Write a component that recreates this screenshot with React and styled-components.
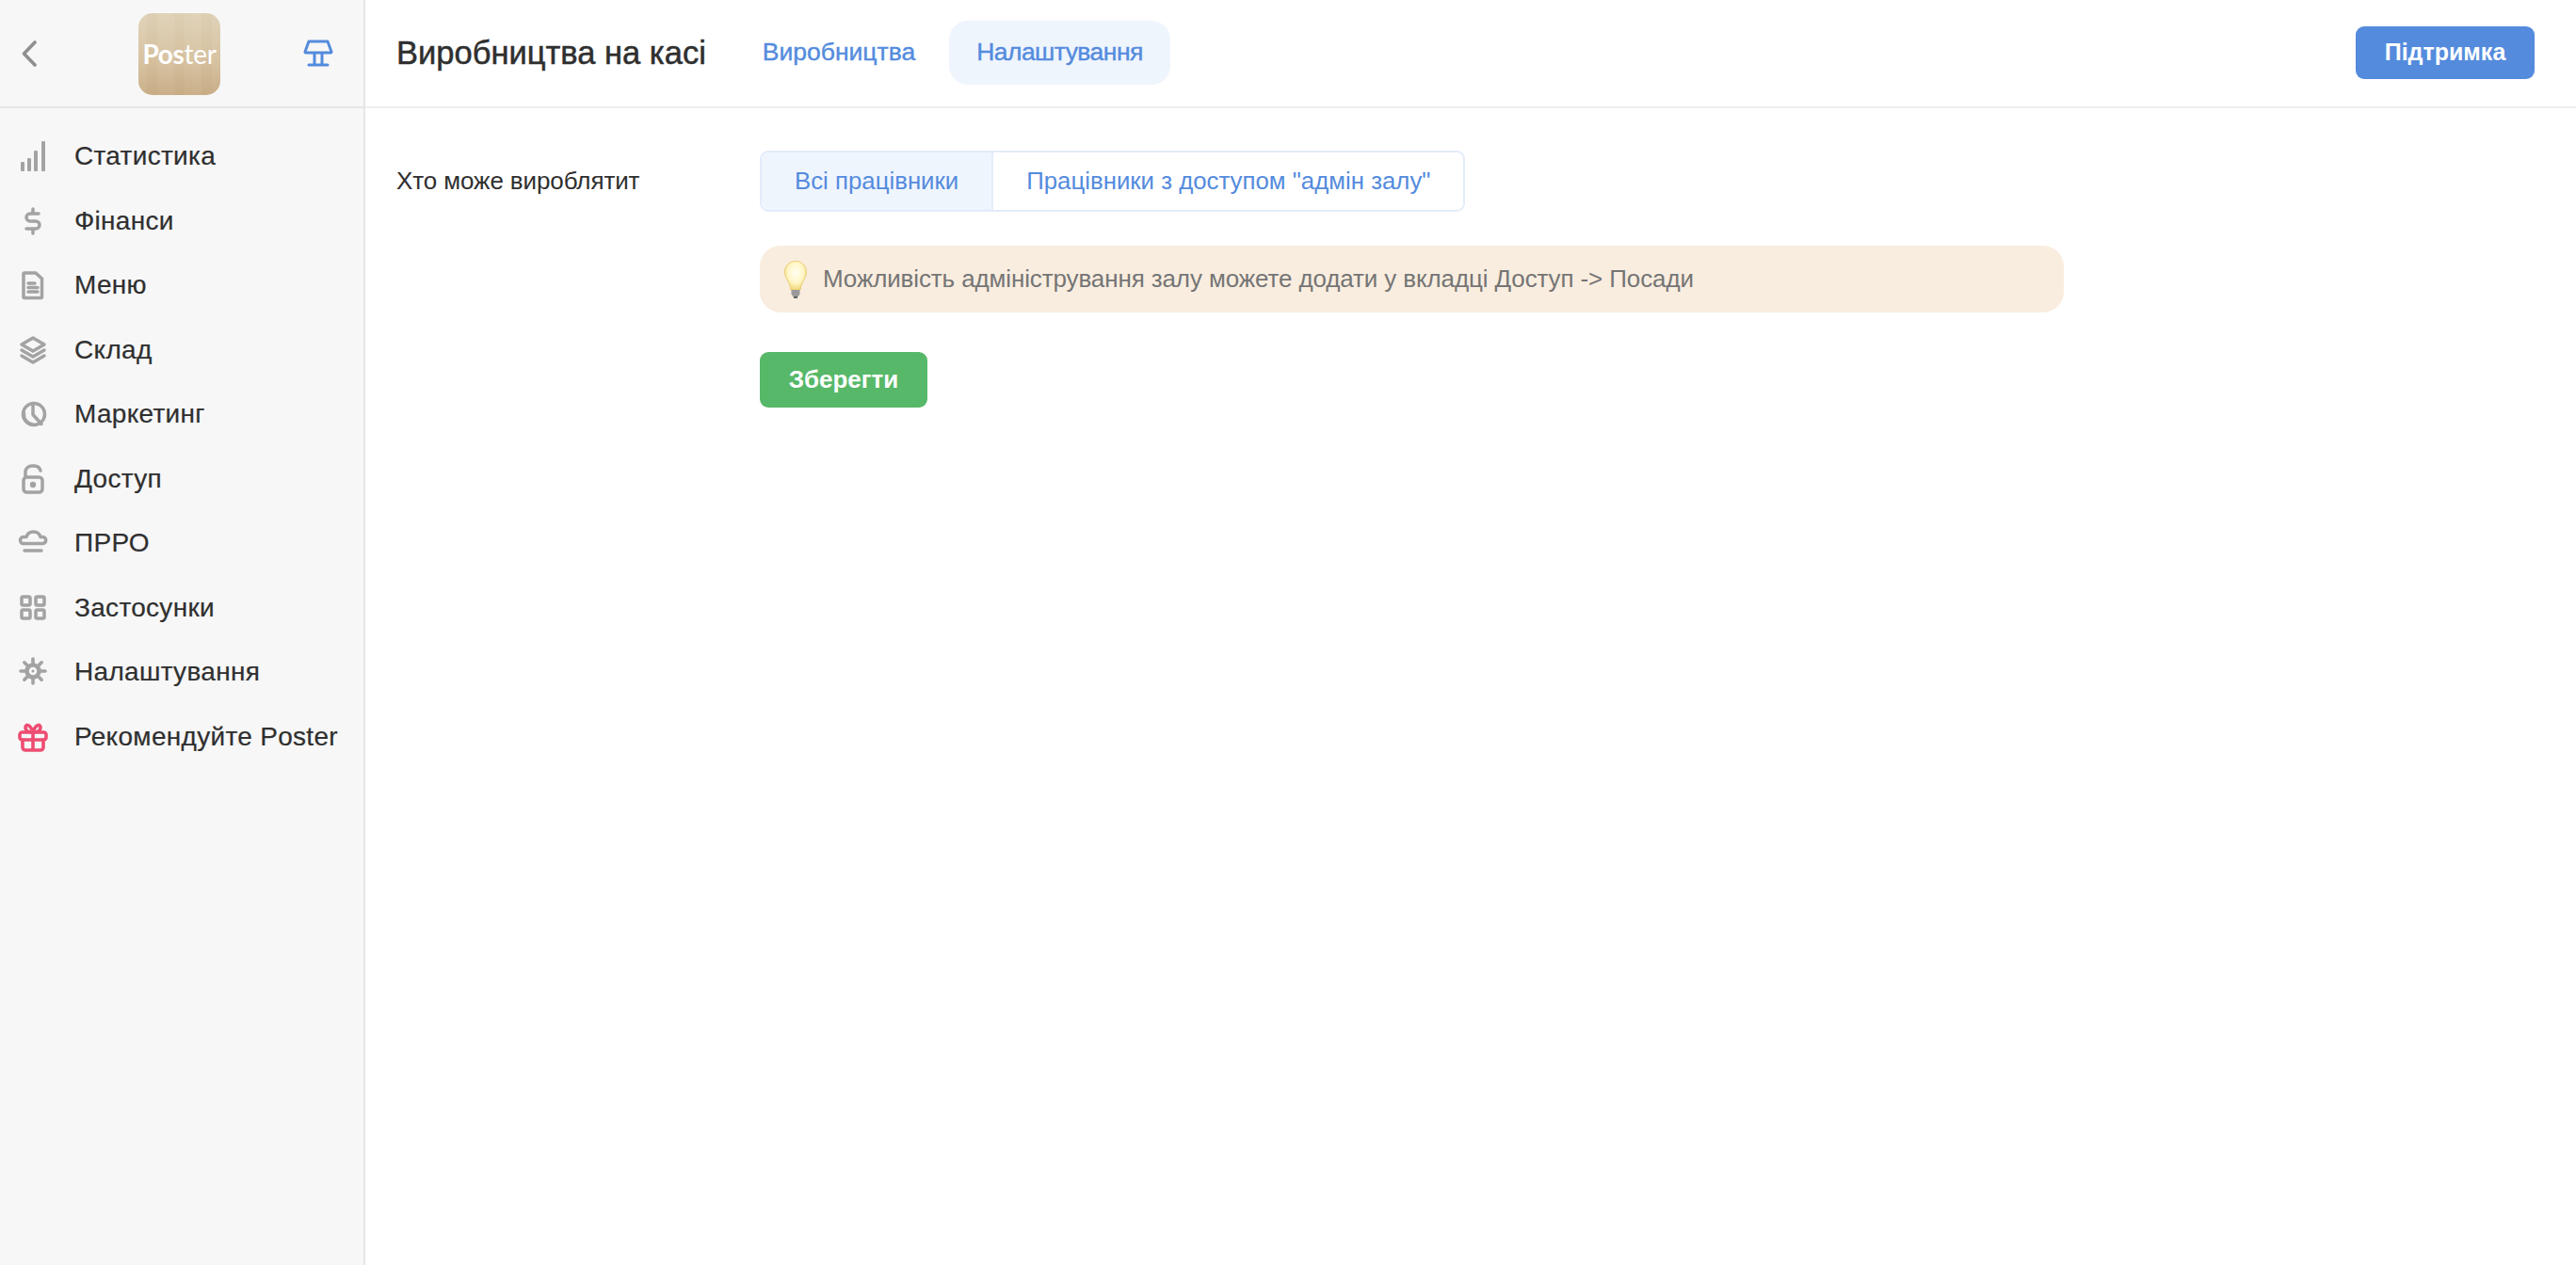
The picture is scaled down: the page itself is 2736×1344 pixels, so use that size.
import React from 'react';
import styled, { createGlobalStyle } from 'styled-components';

const GlobalStyle = createGlobalStyle`
  html, body { margin: 0; padding: 0; height: 100%; background: #fff; }
  body { font-family: "Liberation Sans", Arial, sans-serif; color: #2f2f2f; }
  #root { height: 100%; }
`;

const Page = styled.div`
  display: flex;
  height: 1344px;
  overflow: hidden;
`;

const Sidebar = styled.aside`
  width: 388px;
  flex: none;
  box-sizing: border-box;
  background: #f7f7f7;
  border-right: 2px solid #e6e6e6;
`;

const SideTop = styled.div`
  height: 115px;
  box-sizing: border-box;
  border-bottom: 2px solid #e6e6e6;
  display: grid;
  grid-template-columns: 125px 87px 1fr;
  align-items: center;
  padding: 0 32px 0 22px;
`;

const Logo = styled.div`
  width: 87px;
  height: 87px;
  margin-top: 1px;
  border-radius: 15px;
  display: flex;
  align-items: center;
  justify-content: center;
  font-family: Lato, "Liberation Sans", sans-serif;
  font-size: 28px;
  letter-spacing: -0.3px;
  color: #fff;
  background:
    repeating-linear-gradient(90deg, rgba(255,255,255,.025) 0 9px, rgba(120,80,30,.025) 9px 20px, rgba(255,255,255,.012) 20px 29px),
    linear-gradient(180deg, #e0d2b8 0%, #d7c3a2 55%, #c9ae87 100%);
  b { font-weight: 700; }
  span { font-weight: 400; }
`;

const StandIcon = styled.svg`
  justify-self: end;
  width: 32px;
  height: 32px;
`;

const Nav = styled.nav`
  padding-top: 17px;
`;

const NavRow = styled.a`
  display: flex;
  align-items: center;
  height: 68.5px;
  padding-left: 19px;
  gap: 28px;
  font-size: 28px;
  letter-spacing: 0.3px;
  color: #2f2f2f;
  -webkit-text-stroke: 0.2px #2f2f2f;
  white-space: nowrap;
`;

const NavIcon = styled.svg`
  width: 32px;
  height: 32px;
  flex: none;
  fill: none;
  stroke: ${p => p.$color || '#a3a3a3'};
  stroke-width: 3.5;
  stroke-linecap: round;
  stroke-linejoin: round;
`;

const Main = styled.main`
  flex: 1;
  min-width: 0;
`;

const Header = styled.header`
  height: 115px;
  box-sizing: border-box;
  border-bottom: 2px solid #f0f0f0;
  display: flex;
  align-items: center;
  gap: 7px;
  padding: 0 44px 0 33px;
`;

const Title = styled.h1`
  margin: 0 24px 0 0;
  font-size: 34.5px;
  font-weight: 400;
  -webkit-text-stroke: 0.5px #2f2f2f;
  color: #2f2f2f;
  white-space: nowrap;
`;

const Tab = styled.a`
  display: flex;
  align-items: center;
  height: 68px;
  margin-top: -2px;
  padding: 0 29px;
  border-radius: 20px;
  font-size: 26.5px;
  letter-spacing: ${p => (p.$active ? '-0.55px' : '0')};
  color: #548bdd;
  -webkit-text-stroke: 0.4px #548bdd;
  background: ${p => (p.$active ? '#eff5fd' : 'transparent')};
`;

const Support = styled.button`
  margin-left: auto;
  width: 190px;
  height: 56px;
  margin-top: -2px;
  border: none;
  border-radius: 9px;
  background: #548bdd;
  color: #fff;
  font: 700 25px "Liberation Sans", Arial, sans-serif;
`;

const Content = styled.div`
  padding: 45px 0 0 33px;
  display: grid;
  grid-template-columns: 386px 1385px;
  align-items: start;
`;

const FieldLabel = styled.div`
  font-size: 26px;
  letter-spacing: -0.1px;
  line-height: 64px;
  color: #2f2f2f;
`;

const Field = styled.div`
  display: flex;
  flex-direction: column;
  align-items: flex-start;
`;

const Segment = styled.div`
  display: flex;
  height: 65px;
  box-sizing: border-box;
  border: 2px solid #e3ecfa;
  border-radius: 9px;
  overflow: hidden;
`;

const SegmentItem = styled.div`
  display: flex;
  align-items: center;
  padding: 0 35px;
  font-size: 25.8px;
  color: #548bdd;
  background: ${p => (p.$active ? '#eff5fd' : '#fff')};
  & + & { border-left: 2px solid #e3ecfa; }
`;

const Notice = styled.div`
  align-self: stretch;
  margin-top: 36px;
  height: 71px;
  border-radius: 22px;
  background: #f9eddf;
  display: flex;
  align-items: center;
  gap: 17px;
  padding-left: 26px;
  font-size: 26px;
  letter-spacing: -0.12px;
  color: #757575;
`;

const SaveButton = styled.button`
  margin-top: 42px;
  width: 178px;
  height: 59px;
  border: none;
  border-radius: 9px;
  background: #56b868;
  color: #fff;
  font: 700 26px "Liberation Sans", Arial, sans-serif;
`;

const gearTeeth = [0, 45, 90, 135, 180, 225, 270, 315];

const icons = {
  stats: (
    <g fill="#a3a3a3" stroke="none">
      <rect x="3" y="22" width="4" height="10" rx="1" />
      <rect x="10" y="18" width="4" height="14" rx="1" />
      <rect x="17" y="10" width="4" height="22" rx="1" />
      <rect x="25" y="0" width="4" height="32" rx="1" />
    </g>
  ),
  money: <path d="M22 8H13a4 4 0 0 0-4 4v0a4 4 0 0 0 4 4h6a4 4 0 0 1 4 4v0a4 4 0 0 1-4 4H9M16 3v5M16 24v5" />,
  doc: <path d="M7 3h12l6.500 6v19.500a1 1 0 0 1-1 1H7a1 1 0 0 1-1-1V4a1 1 0 0 1 1-1zM11 14h7M11 18.500h10M11 23h10" />,
  layers: <path d="M16 3l12 7-12 7-12-7zM4 16l12 7 12-7M4 22l12 7 12-7" />,
  pie: (
    <>
      <circle cx="17" cy="16" r="11.500" />
      <path d="M16 4.500v12l9 10M6.500 15a10.500 10.500 0 0 0 9 12" />
    </>
  ),
  lock: (
    <>
      <rect x="6" y="14" width="20" height="16" rx="3.500" />
      <path d="M8 14V8a7 7 0 0 1 7-6h2a7 7 0 0 1 7 5" />
      <circle cx="16" cy="22" r="1.400" fill="#a3a3a3" />
    </>
  ),
  cloud: <path d="M5.500 16.500a3.500 3.500 0 0 1 1-7h2.500C10 6 13 4 16.500 4S23 6 24 9.500h2a3.500 3.500 0 0 1 .5 7zM7 24h18" />,
  apps: (
    <>
      <rect x="4" y="4" width="9" height="9" rx="1.500" />
      <rect x="19" y="4" width="9" height="9" rx="1.500" />
      <rect x="4" y="18" width="9" height="9" rx="1.500" />
      <rect x="19" y="18" width="9" height="9" rx="1.500" />
    </>
  ),
  gear: (
    <g transform="translate(0 -1)">
      <circle cx="16" cy="16" r="6.500" strokeWidth="4.500" />
      <circle cx="16" cy="16" r="1.500" fill="#a3a3a3" stroke="none" />
      {gearTeeth.map(a => (
        <path key={a} d="M16 3v6" transform={`rotate(${a} 16 16)`} strokeWidth="3.600" />
      ))}
    </g>
  ),
  gift: (
    <g strokeWidth="3.600">
      <rect x="2" y="11" width="28" height="8" rx="2.500" />
      <path d="M5 19v8a3 3 0 0 0 3 3h16a3 3 0 0 0 3-3v-8M16 11v19M16 11c-3 0-8-1-8-5s5-4 8 5c3-9 8-9 8-5s-5 5-8 5z" />
    </g>
  ),
};

const navItems = [
  { icon: 'stats', label: 'Статистика' },
  { icon: 'money', label: 'Фінанси' },
  { icon: 'doc', label: 'Меню' },
  { icon: 'layers', label: 'Склад' },
  { icon: 'pie', label: 'Маркетинг' },
  { icon: 'lock', label: 'Доступ' },
  { icon: 'cloud', label: 'ПРРО' },
  { icon: 'apps', label: 'Застосунки' },
  { icon: 'gear', label: 'Налаштування' },
  { icon: 'gift', label: 'Рекомендуйте Poster', color: '#ee4d72' },
];

const Bulb = () => (
  <svg width="24" height="40" viewBox="0 0 24 40">
    <defs>
      <radialGradient id="bulbGlow" cx="50%" cy="40%" r="60%">
        <stop offset="0%" stopColor="#fffef4" />
        <stop offset="60%" stopColor="#fff6c6" />
        <stop offset="100%" stopColor="#f2d677" />
      </radialGradient>
    </defs>
    <path d="M12 0.500C5.500 0.500 0.500 5.500 0.500 12c0 7 5.500 10 6.500 19h10c1-9 6.500-12 6.500-19C23.500 5.500 18.500 0.500 12 0.500z" fill="url(#bulbGlow)" stroke="#eacd75" />
    <path d="M7.500 31h9v4.500l-2.500 3.500h-4l-2.500-3.500z" fill="#9a9a9a" />
    <path d="M10 39h4" stroke="#444" strokeWidth="1.500" />
  </svg>
);

export default function App() {
  return (
    <Page>
      <GlobalStyle />
      <Sidebar>
        <SideTop>
          <svg width="18" height="28" viewBox="0 0 18 28" fill="none" stroke="#8f8f8f" strokeWidth="3.600" strokeLinecap="round" strokeLinejoin="round">
            <path d="M15 2L3.500 14 15 26" />
          </svg>
          <Logo><b>Pos</b><span>ter</span></Logo>
          <StandIcon viewBox="0 0 32 32" fill="none" stroke="#548bdd" strokeWidth="3" strokeLinecap="round" strokeLinejoin="round">
            <path d="M6 3h20l4 11a1 1 0 0 1-1 1H3a1 1 0 0 1-1-1zM12 15v13M20 15v13M6 28h20" />
          </StandIcon>
        </SideTop>
        <Nav>
          {navItems.map(item => (
            <NavRow key={item.label}>
              <NavIcon viewBox="0 0 32 32" $color={item.color}>{icons[item.icon]}</NavIcon>
              {item.label}
            </NavRow>
          ))}
        </Nav>
      </Sidebar>
      <Main>
        <Header>
          <Title>Виробництва на касі</Title>
          <Tab>Виробництва</Tab>
          <Tab $active>Налаштування</Tab>
          <Support>Підтримка</Support>
        </Header>
        <Content>
          <FieldLabel>Хто може вироблятит</FieldLabel>
          <Field>
            <Segment>
              <SegmentItem $active>Всі працівники</SegmentItem>
              <SegmentItem>Працівники з доступом "адмін залу"</SegmentItem>
            </Segment>
            <Notice>
              <Bulb />
              Можливість адміністрування залу можете додати у вкладці Доступ -&gt; Посади
            </Notice>
            <SaveButton>Зберегти</SaveButton>
          </Field>
        </Content>
      </Main>
    </Page>
  );
}
